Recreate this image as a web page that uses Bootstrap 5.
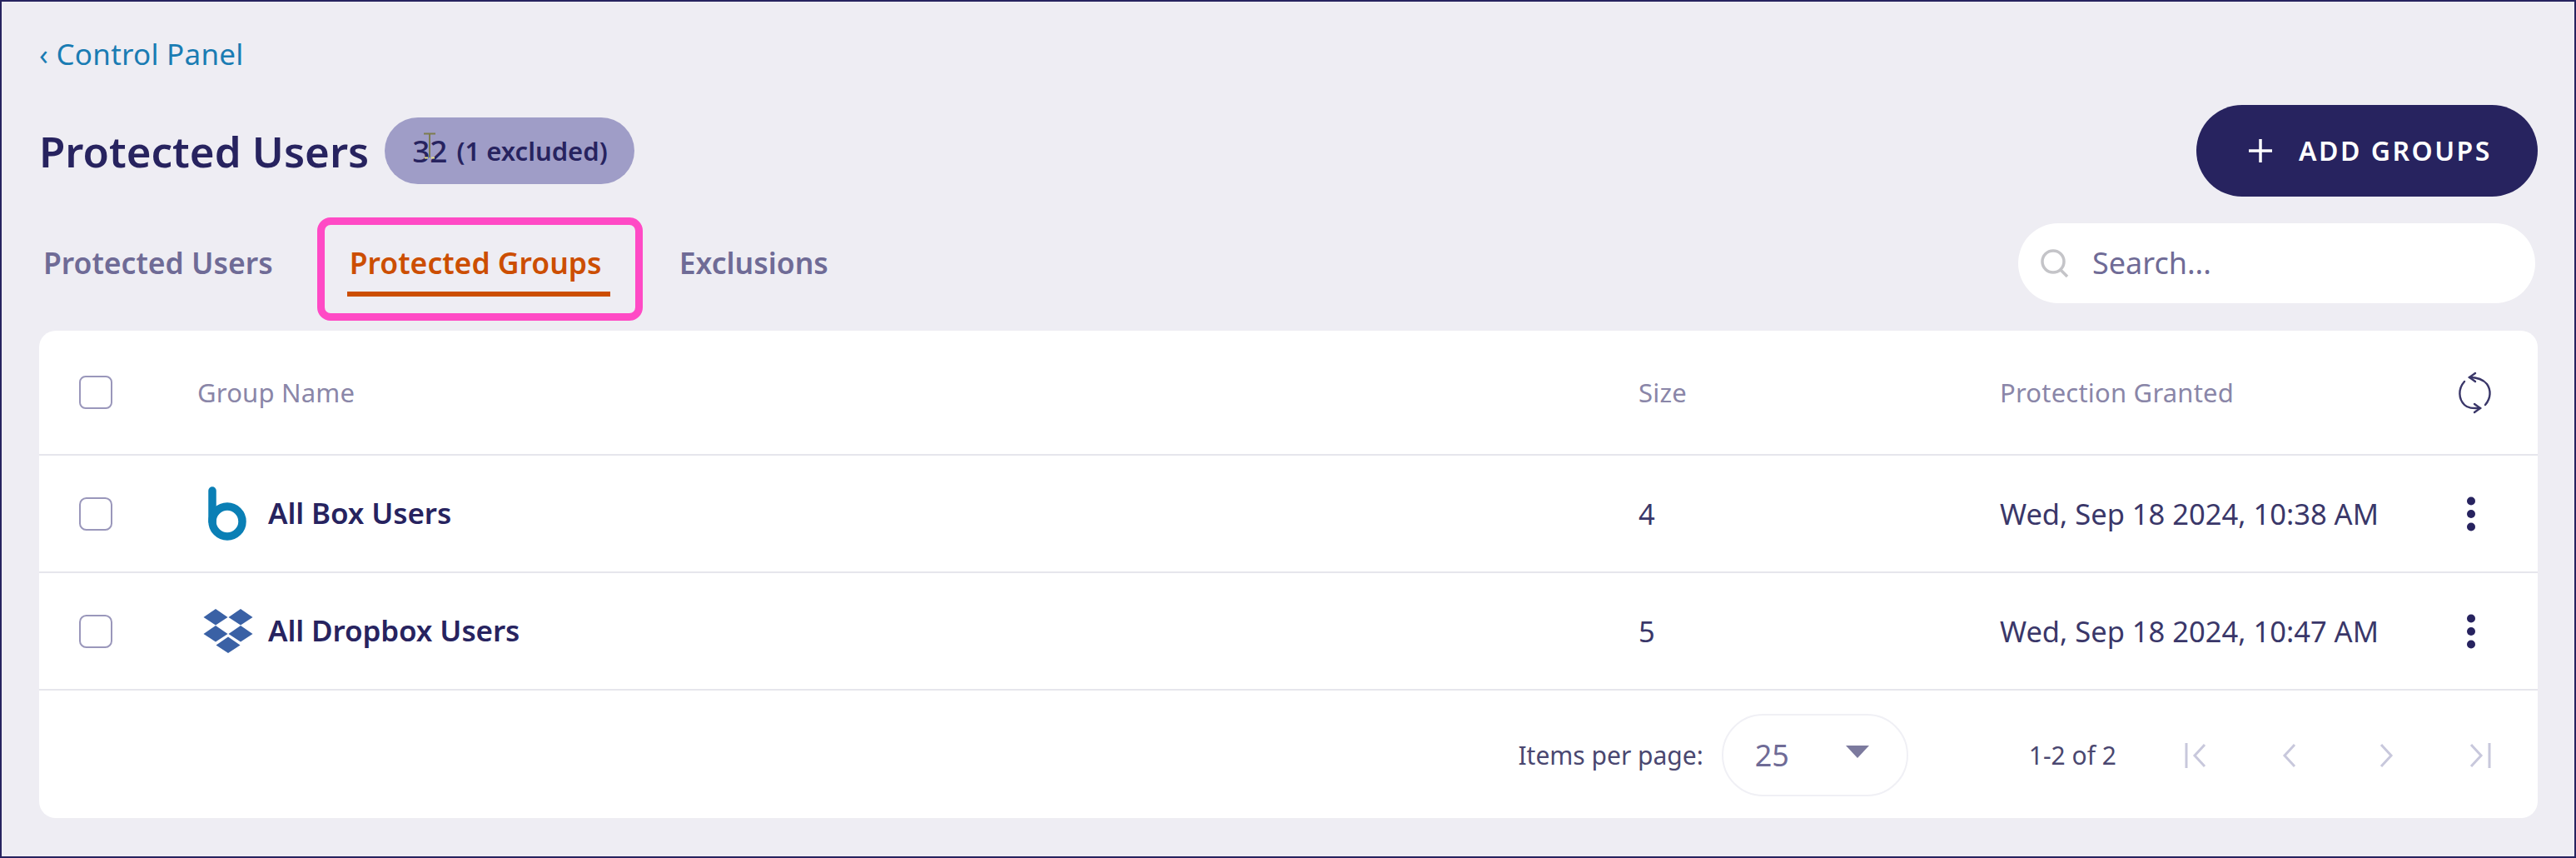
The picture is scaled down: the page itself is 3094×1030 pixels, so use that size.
<!DOCTYPE html>
<html lang="en">
<head>
<meta charset="utf-8">
<title>Protected Users</title>
<link href="https://cdn.jsdelivr.net/npm/bootstrap@5.3.0/dist/css/bootstrap.min.css" rel="stylesheet">
<style>
html,body{height:100%;}
body{background:#eeedf3;font-family:"Noto Sans","Liberation Sans",sans-serif;color:#27235f;}
.frame{height:1030px;border:2px solid #27235f;padding:43px 44px 0 45px;box-sizing:border-box;overflow:hidden;}
.crumb{display:block;height:40px;line-height:40px;font-size:35px;color:#1a7cb3;text-decoration:none;margin-bottom:41px;letter-spacing:.25px;}
.head-row{height:110px;margin-bottom:32px;}
.page-title{font-size:51px;font-weight:600;margin:0;line-height:1;white-space:nowrap;}
.count-pill{display:flex;align-items:center;height:80px;width:300px;margin-left:19px;padding-left:33px;background:#9f9dc7;border-radius:40px;font-size:31px;font-weight:600;white-space:nowrap;flex:none;}
.count-num{font-size:37px;font-weight:500;margin-right:11px;position:relative;}
.ibeam{position:absolute;left:14px;top:6px;}
.add-btn{width:410px;height:110px;border-radius:55px;background:#27235f;border:0;color:#fff;font-size:32px;font-weight:600;letter-spacing:2.5px;display:flex;align-items:center;padding:0 0 0 63px;white-space:nowrap;}
.add-btn:hover{background:#27235f;color:#fff;}
.add-btn svg{margin-right:32px;}
.tab-row{height:96px;margin-bottom:33px;}
.tabset{margin:0;padding:0;list-style:none;display:flex;align-items:flex-start;}
.tab-item{position:relative;padding:27px 5px 14px;border-bottom:6px solid transparent;font-size:35.5px;line-height:41px;font-weight:600;color:#6f6b96;white-space:nowrap;}
.tab-item.on{color:#cc4e00;border-bottom-color:#cc4e00;padding-left:3px;}
.tab-item.first{margin-right:84px;}
.tab-item.mid{width:316px;margin-right:78px;}
.annot{position:absolute;left:-36px;right:-39px;top:-7px;bottom:-35px;border:9px solid #ff4ac5;border-radius:16px;pointer-events:none;}
.search-box{width:621px;height:96px;margin-right:3px;background:#fff;border-radius:48px;padding-left:26px;}
.search-input{border:0;background:transparent;box-shadow:none;font-size:36px;color:#6f6b96;padding:0 0 0 27px;}
.search-input:focus{box-shadow:none;background:transparent;}
.search-input::placeholder{color:#6f6b96;opacity:1;}
.panel{height:585px;background:#fff;border-radius:20px;overflow:hidden;border:0;}
.grid-table{table-layout:fixed;margin:0;--bs-table-color:#27235f;--bs-table-border-color:#e6e6ec;}
.grid-table th,.grid-table td{padding:0;vertical-align:middle;border-bottom:2px solid #e6e6ec;}
.grid-table .hd th{height:149px;font-size:31px;font-weight:400;color:#8a86a8;letter-spacing:.2px;}
.grid-table .rw td{height:141px;font-size:34.5px;color:#3a3769;}
.c-check{width:190px;}.c-name{width:1731px;}.c-size{width:434px;}.c-date{width:528px;}
.box-check{width:40px;height:40px;margin:0 0 0 48px;border:2px solid #9a97bb;border-radius:5px;float:none;display:block;}
.grid-table .rw .nm{font-size:35px;font-weight:600;color:#27235f;letter-spacing:-.1px;}
.logo-slot{width:85px;flex:none;}
.logo-drop{margin-left:7px;}
.act{padding-left:32px!important;}
.hd .act{padding-left:20px!important;}
.act svg{display:block;}
.foot-bar{height:154px;padding:28px 56px 0 0;}
.foot-label{font-size:30px;color:#4a4770;white-space:nowrap;}
.size-select{width:224px;height:99px;margin:0 145px 0 22px;border:2px solid #f0f0f5;border-radius:50px;font-size:36px;color:#6f6b96;padding:0 45px 0 38px;}
.caret-mark{width:0;height:0;border-left:14px solid transparent;border-right:14px solid transparent;border-top:15px solid #7c7a9e;margin-top:-8px;}
.pager-btns{margin-left:82px;width:368px;}
.pager-btns svg{display:block;}
.pg-next{margin-left:8px;}
</style>
</head>
<body>
<div class="frame">
  <a class="crumb" href="#">‹ Control Panel</a>

  <div class="head-row d-flex align-items-center justify-content-between">
    <div class="d-flex align-items-center">
      <h1 class="page-title">Protected Users</h1>
      <div class="count-pill"><span class="count-num">32<svg class="ibeam" width="14" height="32" viewBox="0 0 14 32" fill="none"><path d="M0 1.5h14M7 1v29" stroke="#7d7c4f" stroke-width="2"/><path d="M1 30.500h4M9 30.500h4" stroke="#e6e08a" stroke-width="2"/></svg></span>(1 excluded)</div>
    </div>
    <button class="btn add-btn" type="button">
      <svg width="28" height="28" viewBox="0 0 28 28"><path d="M14 0v28M0 14h28" stroke="#fff" stroke-width="3.500" fill="none"/></svg>
      ADD GROUPS
    </button>
  </div>

  <div class="tab-row d-flex justify-content-between align-items-start">
    <ul class="tabset">
      <li class="tab-item first">Protected Users</li>
      <li class="tab-item on mid">Protected Groups<span class="annot"></span></li>
      <li class="tab-item">Exclusions</li>
    </ul>
    <div class="search-box d-flex align-items-center">
      <svg width="36" height="36" viewBox="0 0 36 36" class="flex-shrink-0"><circle cx="16" cy="16" r="13" fill="none" stroke="#c4c4c8" stroke-width="3.500"/><path d="M25 26l8 8" stroke="#c4c4c8" stroke-width="3.500" fill="none"/></svg>
      <input class="form-control search-input" type="text" placeholder="Search...">
    </div>
  </div>

  <div class="card panel">
    <table class="table grid-table">
      <colgroup><col class="c-check"><col class="c-name"><col class="c-size"><col class="c-date"><col></colgroup>
      <thead>
        <tr class="hd">
          <th><input class="form-check-input box-check" type="checkbox" aria-label="Select all"></th>
          <th>Group Name</th>
          <th>Size</th>
          <th>Protection Granted</th>
          <th class="act">
            <svg width="44" height="52" viewBox="20 14 44 52" fill="none" stroke="#3a3769" stroke-width="2.400" stroke-linecap="round"><path d="M36 22c9 0 16 2 21 8 5 7 5 17-2 25"/><path d="M30 27c-8 9-7 21 0 28 5 5 12 4 19 4"/><path d="M43 17l-7 5 7 5"/><path d="M42 54l7 5-7 5"/></svg>
          </th>
        </tr>
      </thead>
      <tbody>
        <tr class="rw">
          <td><input class="form-check-input box-check" type="checkbox" aria-label="Select All Box Users"></td>
          <td><div class="d-flex align-items-center nm"><span class="logo-slot d-flex"><svg class="ms-2" width="60" height="66" viewBox="0 0 60 66"><g fill="none" stroke="#0a7fb5" stroke-width="9.500" stroke-linecap="round"><path d="M10 5v37"/><circle cx="28" cy="42" r="18"/></g></svg></span>All Box Users</div></td>
          <td>4</td>
          <td>Wed, Sep 18 2024, 10:38 AM</td>
          <td class="act"><svg width="12" height="42" viewBox="0 0 12 42" fill="#27235f"><circle cx="6" cy="5.500" r="5"/><circle cx="6" cy="21" r="5"/><circle cx="6" cy="36.500" r="5"/></svg></td>
        </tr>
        <tr class="rw">
          <td><input class="form-check-input box-check" type="checkbox" aria-label="Select All Dropbox Users"></td>
          <td><div class="d-flex align-items-center nm"><span class="logo-slot d-flex"><svg width="60" height="53" viewBox="0 0 60 53" fill="#3a61a5" class="logo-drop"><path d="M15 0L29.500 10 15 19.500 .5 10z"/><path d="M45 0L59.500 10 45 19.500 30.500 10z"/><path d="M15 20L29.500 30 15 39.500 .5 30z"/><path d="M45 20L59.500 30 45 39.500 30.500 30z"/><path d="M30 33.500L44.500 43.500 30 53 15.500 43.500z"/></svg></span>All Dropbox Users</div></td>
          <td>5</td>
          <td>Wed, Sep 18 2024, 10:47 AM</td>
          <td class="act"><svg width="12" height="42" viewBox="0 0 12 42" fill="#27235f"><circle cx="6" cy="5.500" r="5"/><circle cx="6" cy="21" r="5"/><circle cx="6" cy="36.500" r="5"/></svg></td>
        </tr>
      </tbody>
    </table>
    <div class="foot-bar d-flex align-items-start justify-content-end">
      <div class="d-flex align-items-center">
        <span class="foot-label">Items per page:</span>
        <div class="size-select d-flex align-items-center justify-content-between"><span>25</span><span class="caret-mark"></span></div>
        <span class="foot-label">1-2 of 2</span>
        <div class="pager-btns d-flex align-items-center justify-content-between">
          <svg width="28" height="30" viewBox="0 0 28 30" fill="none" stroke="#c8c8dc" stroke-width="3"><path d="M2 0v30"/><path d="M24 2L12 15l12 13"/></svg>
          <svg width="18" height="30" viewBox="0 0 18 30" fill="none" stroke="#c8c8dc" stroke-width="3"><path d="M15 2L3 15l12 13"/></svg>
          <svg class="pg-next" width="18" height="30" viewBox="0 0 18 30" fill="none" stroke="#c8c8dc" stroke-width="3"><path d="M3 2l12 13L3 28"/></svg>
          <svg width="28" height="30" viewBox="0 0 28 30" fill="none" stroke="#c8c8dc" stroke-width="3"><path d="M26 0v30"/><path d="M4 2l12 13L4 28"/></svg>
        </div>
      </div>
    </div>
  </div>
</div>
<script src="https://cdn.jsdelivr.net/npm/bootstrap@5.3.0/dist/js/bootstrap.bundle.min.js"></script>
</body>
</html>
